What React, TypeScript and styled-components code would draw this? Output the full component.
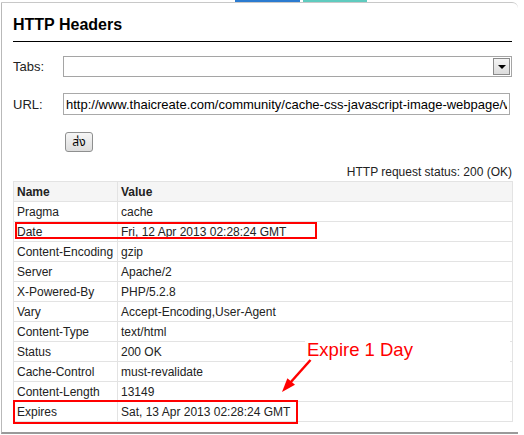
import styled, { createGlobalStyle } from "styled-components";

const GlobalStyle = createGlobalStyle`
  html, body {
    margin: 0;
    padding: 0;
    background: #ffffff;
  }
  body {
    font-family: "Liberation Sans", Arial, sans-serif;
    color: #222222;
  }
`;

const headers: [string, string][] = [
  ["Pragma", "cache"],
  ["Date", "Fri, 12 Apr 2013 02:28:24 GMT"],
  ["Content-Encoding", "gzip"],
  ["Server", "Apache/2"],
  ["X-Powered-By", "PHP/5.2.8"],
  ["Vary", "Accept-Encoding,User-Agent"],
  ["Content-Type", "text/html"],
  ["Status", "200 OK"],
  ["Cache-Control", "must-revalidate"],
  ["Content-Length", "13149"],
  ["Expires", "Sat, 13 Apr 2013 02:28:24 GMT"],
];

const App = () => {
  return (
    <Page>
      <GlobalStyle />
      <BackStrip>
        <BackTab $color="#2b7bd0" $width={65} />
        <BackTab $color="#5fcbbf" $width={64} />
      </BackStrip>
      <Dialog>
        <Title>HTTP Headers</Title>
        <FormRow $top={14}>
          <Label>Tabs:</Label>
          <Select>
            <SelectArrow />
          </Select>
        </FormRow>
        <FormRow $top={16}>
          <Label>URL:</Label>
          <UrlInput
            readOnly
            value="http://www.thaicreate.com/community/cache-css-javascript-image-webpage/view.html"
          />
        </FormRow>
        <SendButton>ส่ง</SendButton>
        <Status>HTTP request status: 200 (OK)</Status>
        <TableWrap>
          <HeaderTable>
            <colgroup>
              <col style={{ width: 104 }} />
              <col />
            </colgroup>
            <thead>
              <tr>
                <Th>Name</Th>
                <Th>Value</Th>
              </tr>
            </thead>
            <tbody>
              {headers.map(([name, value]) => (
                <tr key={name}>
                  <Td>{name}</Td>
                  <Td>{value}</Td>
                </tr>
              ))}
            </tbody>
          </HeaderTable>
          <Highlight style={{ left: 2, top: 41, width: 302, height: 17 }} />
          <Highlight style={{ left: 0, top: 219, width: 285, height: 24 }} />
          <Note>Expire 1 Day</Note>
          <Arrow viewBox="0 0 500 240" width="500" height="240">
            <line x1="297.5" y1="179" x2="277" y2="202" stroke="#ff0000" strokeWidth="2.5" />
            <polygon points="269,211 282,203.8 274.4,197.2" fill="#ff0000" />
          </Arrow>
        </TableWrap>
      </Dialog>
    </Page>
  );
};

export default App;

const Page = styled.div`
  width: 524px;
  height: 435px;
  overflow: hidden;
`;

const BackStrip = styled.div`
  height: 2px;
  display: flex;
  gap: 3px;
  padding-left: 235px;
`;

const BackTab = styled.div<{ $color: string; $width: number }>`
  width: ${(p) => p.$width}px;
  height: 2px;
  background: ${(p) => p.$color};
`;

const Dialog = styled.div`
  box-sizing: border-box;
  margin-left: 1px;
  width: 517px;
  height: 432px;
  padding: 0 6px 0 11px;
  background: #ffffff;
  border-top: 1px solid #c8c8c8;
  border-left: 1px solid #b9b9b9;
  border-bottom: 2px solid #9a9a9a;
  border-top-right-radius: 6px;
`;

const Title = styled.h1`
  margin: 0;
  padding: 12px 0 6px;
  font-size: 16px;
  line-height: 20px;
  font-weight: bold;
  color: #000000;
  border-bottom: 1px solid #000000;
`;

const FormRow = styled.div<{ $top: number }>`
  display: flex;
  align-items: center;
  margin-top: ${(p) => p.$top}px;
`;

const Label = styled.span`
  width: 50px;
  font-size: 13px;
  color: #222222;
`;

const Select = styled.div`
  box-sizing: border-box;
  width: 449px;
  height: 21px;
  border: 1px solid #a5a5a5;
  display: flex;
  justify-content: flex-end;
  align-items: stretch;
  padding: 1px;
`;

const SelectArrow = styled.div`
  box-sizing: border-box;
  width: 17px;
  border: 1px solid #8a8a8a;
  background: linear-gradient(#f4f4f4, #dcdcdc);
  display: flex;
  align-items: center;
  justify-content: center;

  &::after {
    content: "";
    border-left: 4px solid transparent;
    border-right: 4px solid transparent;
    border-top: 4px solid #000000;
    margin-top: 1px;
  }
`;

const UrlInput = styled.input`
  box-sizing: border-box;
  width: 447px;
  height: 22px;
  margin: 0;
  padding: 0 2px;
  border: 1px solid #a9a9a9;
  font-family: "Liberation Sans", Arial, sans-serif;
  font-size: 13px;
  color: #000000;
  outline: none;
`;

const SendButton = styled.button`
  display: block;
  box-sizing: border-box;
  margin: 17px 0 0 52px;
  width: 28px;
  height: 20px;
  padding: 0;
  border: 1px solid #8e8f8f;
  border-radius: 3px;
  background: linear-gradient(#f6f6f6, #dddddd);
  font-family: "Liberation Sans", "Noto Sans Thai", "DejaVu Sans", sans-serif;
  font-size: 12px;
  color: #000000;
`;

const Status = styled.div`
  margin-top: 11px;
  height: 18px;
  line-height: 18px;
  text-align: right;
  font-size: 12px;
  color: #222222;
`;

const TableWrap = styled.div`
  position: relative;
  width: 500px;
`;

const HeaderTable = styled.table`
  width: 500px;
  border-collapse: collapse;
  table-layout: fixed;
  font-size: 12px;
`;

const Th = styled.th`
  box-sizing: border-box;
  height: 20px;
  padding: 0 3px;
  text-align: left;
  font-weight: bold;
  background: #f5f5f5;
  border: 1px solid #e3e3e3;
`;

const Td = styled.td`
  box-sizing: border-box;
  height: 20px;
  padding: 0 3px;
  white-space: nowrap;
  overflow: hidden;
  border: 1px solid #e3e3e3;
`;

const Highlight = styled.div`
  position: absolute;
  box-sizing: border-box;
  border: 2px solid #ff0000;
`;

const Note = styled.div`
  position: absolute;
  left: 292px;
  top: 156px;
  width: 205px;
  height: 26px;
  padding-left: 2px;
  box-sizing: border-box;
  background: #ffffff;
  color: #ff0000;
  font-size: 18.5px;
  line-height: 26px;
`;

const Arrow = styled.svg`
  position: absolute;
  left: 0;
  top: 0;
  pointer-events: none;
`;
